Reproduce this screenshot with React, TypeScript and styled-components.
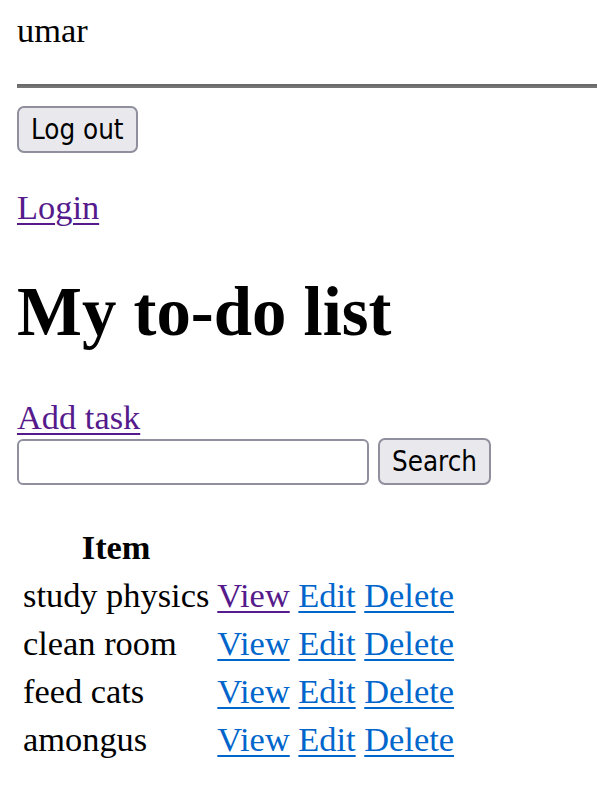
import React from "react";
import styled, { createGlobalStyle } from "styled-components";

const GlobalStyle = createGlobalStyle`
  html, body {
    margin: 0;
    padding: 0;
    background: #ffffff;
  }
  body {
    font-family: "Liberation Serif", "Times New Roman", serif;
    font-size: 34.4px;
    line-height: 40px;
    color: #000000;
  }
`;

const Page = styled.div`
  padding: 10px 0 0 17px;
  overflow: hidden;
`;

const UserName = styled.div`
  height: 40px;
`;

const Rule = styled.hr`
  margin: 34px 0 18px 0;
  height: 0;
  border: none;
  border-top: 2px solid #6a6a6a;
  border-bottom: 2px solid #757575;
`;

const Button = styled.button`
  box-sizing: border-box;
  height: 47px;
  padding: 0 12px;
  margin: 0;
  border: 2px solid #8f8f9d;
  border-radius: 7px;
  background: #e9e9ed;
  color: #000000;
  font-family: "DejaVu Sans Condensed", "DejaVu Sans", Tahoma, sans-serif;
  font-size: 27.5px;
  line-height: 1;
  cursor: pointer;
`;

const Para = styled.div<{ $top?: number }>`
  margin-top: ${(p) => p.$top ?? 0}px;
  height: 40px;
`;

const Link = styled.a<{ $visited?: boolean }>`
  color: ${(p) => (p.$visited ? "#551a8b" : "#0066cc")};
  text-decoration: underline;
  text-decoration-thickness: 2px;
  text-underline-offset: 4px;
`;

const Title = styled.h1`
  margin: 46px 0 46px 0;
  font-size: 68.8px;
  line-height: 78px;
  font-weight: bold;
`;

const SearchForm = styled.form`
  display: flex;
  align-items: center;
  gap: 9px;
  margin: 1px 0 0 0;
`;

const SearchInput = styled.input`
  box-sizing: border-box;
  width: 352px;
  height: 46px;
  margin: 0;
  border: 2px solid #8f8f9d;
  border-radius: 6px;
  background: #ffffff;
  font-size: 28px;
  padding: 0 6px;
`;

const Table = styled.table`
  margin-top: 36px;
  border-collapse: separate;
  border-spacing: 4px;
  margin-left: 0;
`;

const HeadCell = styled.th`
  padding: 2px;
  font-weight: bold;
  text-align: center;
`;

const Cell = styled.td`
  padding: 2px;
  white-space: nowrap;
`;

const Actions = styled.td`
  padding: 2px;
  white-space: nowrap;
`;

const items = ["study physics", "clean room", "feed cats", "amongus"];

export default function App() {
  return (
    <>
      <GlobalStyle />
      <Page>
        <UserName>umar</UserName>
        <Rule />
        <Button type="button">Log out</Button>
        <Para $top={34}>
          <Link href="#" $visited>
            Login
          </Link>
        </Para>
        <Title>My to-do list</Title>
        <Para>
          <Link href="#" $visited>
            Add task
          </Link>
        </Para>
        <SearchForm onSubmit={(e) => e.preventDefault()}>
          <SearchInput type="text" />
          <Button type="submit">Search</Button>
        </SearchForm>
        <Table>
          <thead>
            <tr>
              <HeadCell>Item</HeadCell>
              <HeadCell />
            </tr>
          </thead>
          <tbody>
            {items.map((item, i) => (
              <tr key={item}>
                <Cell>{item}</Cell>
                <Actions>
                  <Link href="#" $visited={i === 0}>
                    View
                  </Link>{" "}
                  <Link href="#">Edit</Link> <Link href="#">Delete</Link>
                </Actions>
              </tr>
            ))}
          </tbody>
        </Table>
      </Page>
    </>
  );
}
